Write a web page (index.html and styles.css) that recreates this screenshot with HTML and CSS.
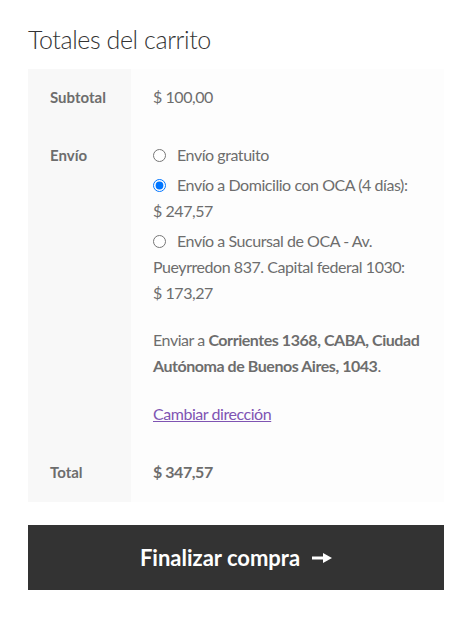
FILE: index.html
```html
<!DOCTYPE html>
<html lang="es">
<head>
<meta charset="utf-8">
<title>Totales del carrito</title>
<link rel="stylesheet" href="styles.css">
</head>
<body>
<div class="cart-totals">
  <h2 class="title">Totales del carrito</h2>
  <table class="totals">
    <tr>
      <th>Subtotal</th>
      <td>$&nbsp;100,00</td>
    </tr>
    <tr>
      <th>Envío</th>
      <td>
        <ul class="methods">
          <li><input type="radio" name="ship" class="radio"><label>Envío gratuito</label></li>
          <li><input type="radio" name="ship" class="radio" checked><label>Envío a Domicilio con OCA (4 días): $&nbsp;247,57</label></li>
          <li><input type="radio" name="ship" class="radio"><label>Envío a Sucursal de OCA - Av. Pueyrredon 837. Capital federal 1030: $&nbsp;173,27</label></li>
        </ul>
        <p class="destination">Enviar a <strong>Corrientes 1368, CABA, Ciudad Autónoma de Buenos Aires, 1043</strong>.</p>
        <a class="change" href="#">Cambiar dirección</a>
      </td>
    </tr>
    <tr>
      <th>Total</th>
      <td><strong>$&nbsp;347,57</strong></td>
    </tr>
  </table>
  <a class="checkout" href="#">Finalizar compra<svg class="arrow" width="20" height="10" viewBox="0 0 20 10"><rect x="0" y="3.5" width="12" height="3" fill="#fff"/><path d="M11 0 L20 5 L11 10 Z" fill="#fff"/></svg></a>
</div>
</body>
</html>
```
FILE: styles.css
```css
html, body {
  margin: 0;
  padding: 0;
  background: #ffffff;
}
body {
  font-family: "Lato", "Open Sans", sans-serif;
  font-size: 16px;
  color: #6d6d6d;
}
.cart-totals {
  padding: 24px 23px 0 28px;
}
.title {
  margin: 0 0 15px 0;
  font-size: 25px;
  line-height: 30px;
  font-weight: 300;
  letter-spacing: -0.4px;
  color: #333333;
}
.totals {
  width: 100%;
  border-collapse: collapse;
  border-spacing: 0;
  margin: 0 0 23px 0;
}
.totals th, .totals td {
  padding: 15px 22px 17px;
  line-height: 26px;
  text-align: left;
  vertical-align: top;
}
.totals th {
  width: 59px;
  background: #f8f8f8;
  font-weight: 700;
  font-size: 15px;
}
.totals td {
  background: #fdfdfd;
  letter-spacing: -0.45px;
}
.totals strong {
  font-weight: 700;
}
.methods {
  list-style: none;
  margin: 0 0 21px 0;
  padding: 0;
}
.methods li {
  margin: 0 0 4px 0;
}
.radio {
  margin: 0 11px 0 0;
  width: 13px;
  height: 13px;
  vertical-align: -1px;
}
.destination {
  margin: 0 0 22px 0;
}
.change {
  color: #7f54b3;
}
.checkout {
  display: flex;
  align-items: center;
  justify-content: center;
  height: 65px;
  background: #333333;
  color: #ffffff;
  text-decoration: none;
  font-size: 22px;
  font-weight: 700;
}
.arrow {
  margin-left: 12px;
}
```
